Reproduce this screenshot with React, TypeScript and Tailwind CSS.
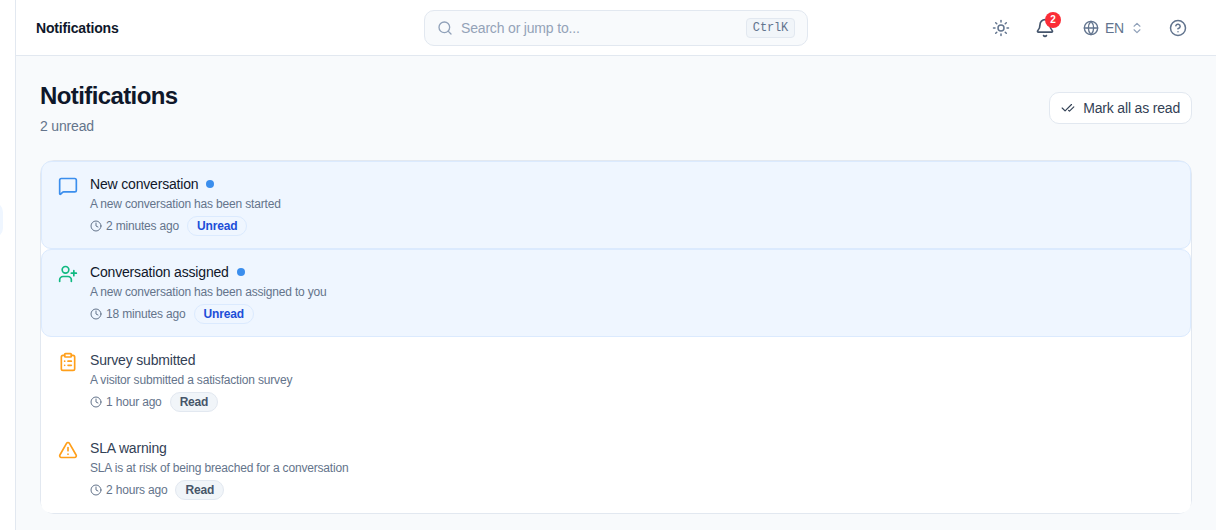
import type { ReactNode } from "react";
import {
  Bell,
  CheckCheck,
  ChevronsUpDown,
  CircleHelp,
  ClipboardList,
  Clock,
  Globe,
  MessageSquare,
  Search,
  Sun,
  TriangleAlert,
  UserPlus,
} from "lucide-react";
import clsx from "clsx";

type Notification = {
  id: number;
  title: string;
  description: string;
  time: string;
  unread: boolean;
  icon: ReactNode;
};

const notifications: Notification[] = [
  {
    id: 1,
    title: "New conversation",
    description: "A new conversation has been started",
    time: "2 minutes ago",
    unread: true,
    icon: <MessageSquare className="size-5 text-[#3b8eed]" />,
  },
  {
    id: 2,
    title: "Conversation assigned",
    description: "A new conversation has been assigned to you",
    time: "18 minutes ago",
    unread: true,
    icon: <UserPlus className="size-5 text-[#10b981]" />,
  },
  {
    id: 3,
    title: "Survey submitted",
    description: "A visitor submitted a satisfaction survey",
    time: "1 hour ago",
    unread: false,
    icon: <ClipboardList className="size-5 text-[#ff9f1a]" />,
  },
  {
    id: 4,
    title: "SLA warning",
    description: "SLA is at risk of being breached for a conversation",
    time: "2 hours ago",
    unread: false,
    icon: <TriangleAlert className="size-5 text-[#ff9f1a]" />,
  },
];

const Header = () => (
  <header className="grid h-14 shrink-0 grid-cols-[1fr_384px_1fr] items-center border-b border-slate-200 bg-white px-5">
    <span className="text-sm font-semibold text-[#0f172a]">Notifications</span>

    <button className="flex h-9 items-center gap-2 rounded-[10px] border border-slate-200 bg-slate-50 px-3">
      <Search className="size-4 text-slate-400" />
      <span className="flex-1 text-left text-sm text-[#94a3b8]">Search or jump to...</span>
      <kbd className="flex h-5 items-center rounded border border-slate-200 bg-slate-100 px-1.5 font-['Liberation_Mono',monospace] text-xs text-slate-500">
        CtrlK
      </kbd>
    </button>

    <div className="flex items-center justify-end pr-1 text-slate-500">
      <button className="mr-4 flex size-7 items-center justify-center">
        <Sun className="size-[18px]" />
      </button>
      <button className="relative mr-6 flex size-7 items-center justify-center text-slate-600">
        <Bell className="size-5" />
        <span className="absolute -top-0.5 left-3.5 flex size-4 items-center justify-center rounded-full bg-[#fb2c36] text-[10px] font-bold text-white">
          2
        </span>
      </button>
      <button className="mr-5 flex items-center gap-1.5 text-sm">
        <Globe className="size-4" />
        <span>EN</span>
        <ChevronsUpDown className="size-3.5 text-slate-400" />
      </button>
      <button className="flex size-7 items-center justify-center">
        <CircleHelp className="size-[18px]" />
      </button>
    </div>
  </header>
);

const NotificationRow = ({ item }: { item: Notification }) => (
  <div
    className={clsx(
      "flex gap-3 rounded-[10px] border px-4 py-3",
      item.unread ? "border-blue-100 bg-blue-50" : "border-transparent bg-white"
    )}
  >
    <div className="mt-0.5 shrink-0">{item.icon}</div>
    <div className="min-w-0 flex-1">
      <div className="flex items-center gap-2">
        <p className={clsx("text-sm", item.unread ? "text-[#0f172a]" : "text-[#334155]")}>
          {item.title}
        </p>
        {item.unread && <span className="size-2 rounded-full bg-[#3b8eed]" />}
      </div>
      <p className="mt-0.5 text-xs text-[#64748b]">{item.description}</p>
      <div className="mt-1 flex items-center gap-2">
        <span className="flex items-center gap-1 text-xs text-[#64748b]">
          <Clock className="size-3" />
          {item.time}
        </span>
        <span
          className={clsx(
            "flex h-5 items-center rounded-full border px-[9px] text-xs font-semibold",
            item.unread
              ? "border-blue-100 bg-blue-50 text-[#1d4ed8]"
              : "border-slate-200 bg-slate-100 text-[#475569]"
          )}
        >
          {item.unread ? "Unread" : "Read"}
        </span>
      </div>
    </div>
  </div>
);

export default function App() {
  const unreadCount = notifications.filter((n) => n.unread).length;

  return (
    <div className="flex h-screen overflow-hidden bg-slate-50 font-['Liberation_Sans',Arial,sans-serif] tracking-[-0.011em]">
      <aside className="w-4 shrink-0 border-r border-slate-200 bg-white pt-[202px]">
        <div className="-ml-8 h-9 w-[35px] rounded-[10px] bg-blue-50" />
      </aside>

      <div className="flex min-w-0 flex-1 flex-col">
        <Header />
        <main className="flex-1 p-6">
          <div className="flex items-center justify-between">
            <div>
              <h1 className="text-2xl font-semibold tracking-tight text-[#0f172a]">
                Notifications
              </h1>
              <p className="mt-1 text-sm text-[#64748b]">{unreadCount} unread</p>
            </div>
            <button className="flex h-8 items-center gap-2 rounded-[10px] border border-slate-200 bg-white px-[11px] text-sm text-[#334155]">
              <CheckCheck className="size-3.5" />
              Mark all as read
            </button>
          </div>

          <div className="mt-6 rounded-[14px] border border-slate-200 bg-white">
            {notifications.map((item) => (
              <NotificationRow key={item.id} item={item} />
            ))}
          </div>
        </main>
      </div>
    </div>
  );
}
